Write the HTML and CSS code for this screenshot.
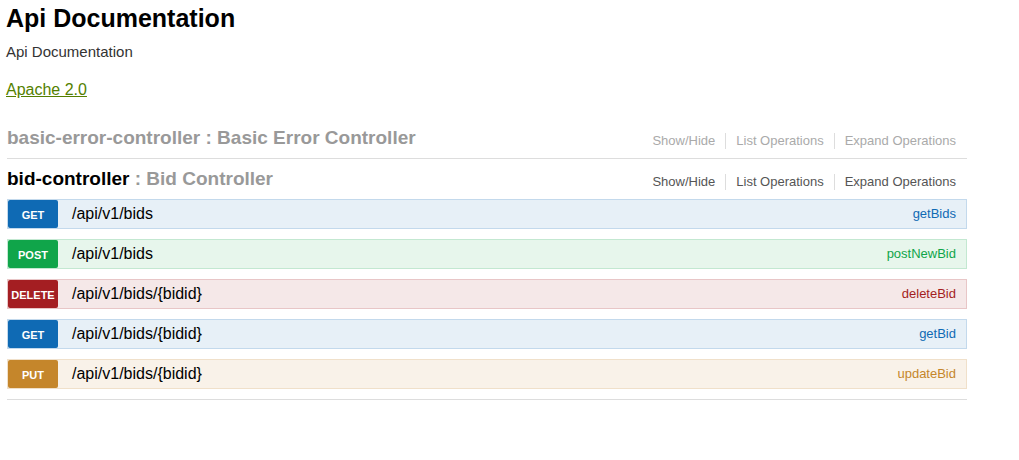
FILE: index.html
```html
<!DOCTYPE html>
<html lang="en">
<head>
<meta charset="utf-8">
<title>Api Documentation</title>
<link rel="stylesheet" href="styles.css">
</head>
<body>
<main class="page">
  <header class="info">
    <h1 class="info-title">Api Documentation</h1>
    <p class="info-description">Api Documentation</p>
    <a class="info-license" href="#license">Apache 2.0</a>
  </header>
  <div class="resources">
    <section class="resource">
      <div class="heading">
        <h2 class="heading-title"><a href="#error">basic-error-controller</a> : Basic Error Controller</h2>
        <nav class="options" aria-label="Basic Error Controller">
          <a href="#error">Show/Hide</a>
          <a href="#error">List Operations</a>
          <a href="#error">Expand Operations</a>
        </nav>
      </div>
    </section>
    <section class="resource active">
      <div class="heading">
        <h2 class="heading-title"><a href="#bid">bid-controller</a> : Bid Controller</h2>
        <nav class="options" aria-label="Bid Controller">
          <a href="#bid">Show/Hide</a>
          <a href="#bid">List Operations</a>
          <a href="#bid">Expand Operations</a>
        </nav>
      </div>
      <ul class="operations">
        <li class="operation get"><a class="method" href="#getBids">GET</a><a class="path" href="#getBids">/api/v1/bids</a><a class="name" href="#getBids">getBids</a></li>
        <li class="operation post"><a class="method" href="#postNewBid">POST</a><a class="path" href="#postNewBid">/api/v1/bids</a><a class="name" href="#postNewBid">postNewBid</a></li>
        <li class="operation delete"><a class="method" href="#deleteBid">DELETE</a><a class="path" href="#deleteBid">/api/v1/bids/{bidid}</a><a class="name" href="#deleteBid">deleteBid</a></li>
        <li class="operation get"><a class="method" href="#getBid">GET</a><a class="path" href="#getBid">/api/v1/bids/{bidid}</a><a class="name" href="#getBid">getBid</a></li>
        <li class="operation put"><a class="method" href="#updateBid">PUT</a><a class="path" href="#updateBid">/api/v1/bids/{bidid}</a><a class="name" href="#updateBid">updateBid</a></li>
      </ul>
    </section>
  </div>
</main>
</body>
</html>
```
FILE: styles.css
```css
* { box-sizing: border-box; }
body {
  margin: 0;
  background: #fff;
  color: #000;
  font-family: "Liberation Sans", Arial, sans-serif;
}
a { color: inherit; text-decoration: none; }
.page { max-width: 967px; padding: 4px 0 0 6px; }
.info { padding-bottom: 18px; }
.info-title { margin: 0; font-size: 25px; line-height: 28px; }
.info-description { margin: 10px 0 18px; font-size: 15px; line-height: 20px; color: #333; }
.info-license { display: block; font-size: 16px; line-height: 20px; color: #547f00; text-decoration: underline; }
.resources { padding-left: 1px; }
.resource { border-bottom: 1px solid #ddd; }
.heading { display: flex; justify-content: space-between; padding-bottom: 9px; }
.heading-title { margin: 0; padding-top: 9px; font-size: 19px; line-height: 22px; color: #999; }
.options { display: flex; padding: 15px 11px 0 0; font-size: 13px; line-height: 16px; color: #aaa; }
.options a { height: 16px; }
.options a + a { margin-left: 10px; padding-left: 10px; border-left: 1px solid #ddd; }
.active .heading-title a { color: #000; }
.active .options { color: #555; }
.operations { list-style: none; margin: 0 0 10px; padding: 0; display: grid; gap: 10px; }
.operation { display: flex; align-items: center; border: 1px solid var(--line); background: var(--tint); }
.method { width: 50px; height: 28px; border-radius: 2px; background: var(--main); color: #fff; font-size: 11px; font-weight: 700; line-height: 30px; text-align: center; }
.path { margin-left: 14px; font-size: 16px; line-height: 28px; }
.name { margin-left: auto; padding-right: 10px; font-size: 13px; line-height: 28px; color: var(--main); }
.get { --main: #0f6ab4; --line: #c3d9ec; --tint: #e7f0f7; }
.post { --main: #10a54a; --line: #c3e8d1; --tint: #e7f6ec; }
.delete { --main: #a41e22; --line: #e8c6c7; --tint: #f5e8e8; }
.put { --main: #c5862b; --line: #f0e0ca; --tint: #f9f2e9; }
```
